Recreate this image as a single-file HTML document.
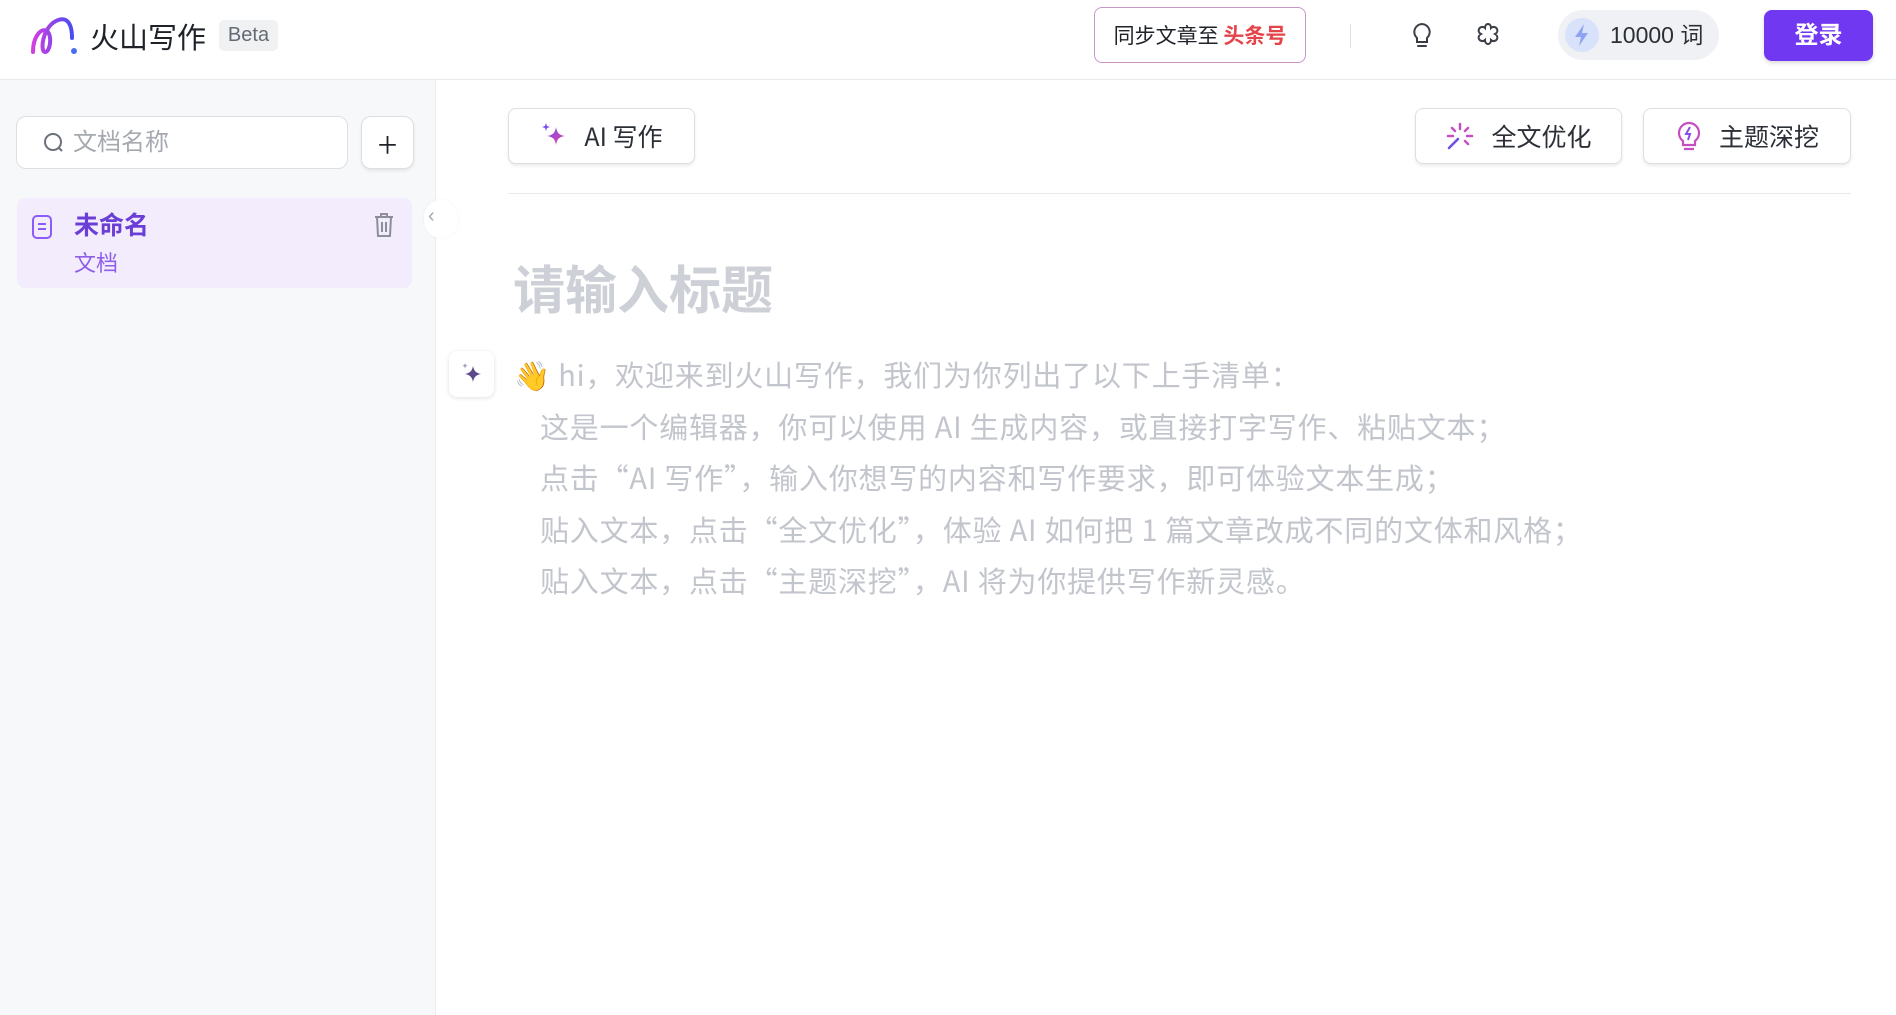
<!DOCTYPE html>
<html><head><meta charset="utf-8"><style>
*{box-sizing:border-box;margin:0;padding:0}
body{width:1896px;height:1015px;overflow:hidden;background:#fff;font-family:"Liberation Sans","Noto Sans CJK SC",sans-serif;position:relative;color:#1f2329}
.abs{position:absolute}
.hdr{left:0;top:0;width:1896px;height:80px;border-bottom:1px solid #e8e9ec;background:#fff}
.side{left:0;top:80px;width:436px;height:935px;background:#f7f8fa;border-right:1px solid #eceef1}
.btn{background:#fff;border:1px solid #dcdfe4;border-radius:8px;box-shadow:0 2px 3px rgba(0,0,0,.08);display:flex;align-items:center;justify-content:center;font-size:25px;color:#2b2f36;font-family:"Noto Sans CJK SC",sans-serif}
.body p{position:absolute;left:540px;font-size:29px;letter-spacing:0.8px;color:#c2c5cc;white-space:nowrap;line-height:40px;font-family:"Noto Sans CJK SC",sans-serif}
</style></head><body>
<div class="abs hdr"></div>
<svg class="abs" style="left:30px;top:16px" width="54" height="40" viewBox="0 0 54 40">
<defs><linearGradient id="g" x1="0" x2="1"><stop offset="0" stop-color="#d43ee0"/><stop offset="1" stop-color="#4b4ef0"/></linearGradient></defs>
<path d="M3 36 C3 20 12 10 18 16 C22 22 20 36 15 36 C10 36 12 12 26 5 C36 0 42 6 42 22" fill="none" stroke="url(#g)" stroke-width="4" stroke-linecap="round"/>
<circle cx="44" cy="35" r="3" fill="#4b6cf0"/></svg>
<div class="abs" style="left:90px;top:16px;font-size:29px;line-height:40px;color:#1f2329;font-family:'Noto Sans CJK SC',sans-serif">火山写作</div>
<div class="abs" style="left:219px;top:20px;width:59px;height:31px;background:#f0f1f3;border-radius:5px;font-size:20px;color:#646a73;text-align:center;line-height:31px">Beta</div>
<div class="abs" style="left:1094px;top:7px;width:212px;height:56px;border:1px solid #c996c8;border-radius:8px;font-size:21px;line-height:54px;text-align:center;color:#1f2329;font-family:'Noto Sans CJK SC',sans-serif">同步文章至 <b style="color:#e5434a">头条号</b></div>
<div class="abs" style="left:1350px;top:24px;width:1px;height:24px;background:#dfe1e5"></div>
<svg class="abs" style="left:1410px;top:22px" width="24" height="28" viewBox="0 0 24 28"><path d="M12 2a8 8 0 0 0-5 14v4h10v-4a8 8 0 0 0-5-14zM8 24h8" fill="none" stroke="#3b3f45" stroke-width="2" stroke-linecap="round"/></svg>
<svg class="abs" style="left:1474px;top:21px" width="28" height="28" viewBox="0 0 28 28"><path d="M14 3c2 0 3 2 3 4 2-2 5-1 6 1s0 4-2 5c2 1 3 3 2 5s-4 3-6 1c0 2-1 4-3 4s-3-2-3-4c-2 2-5 1-6-1s0-4 2-5c-2-1-3-3-2-5s4-3 6-1c0-2 1-4 3-4z" fill="none" stroke="#3b3f45" stroke-width="2"/></svg>
<div class="abs" style="left:1558px;top:10px;width:161px;height:50px;background:#f0f1f4;border-radius:25px"></div>
<div class="abs" style="left:1565px;top:18px;width:34px;height:34px;border-radius:17px;background:#d9e2fb"></div>
<svg class="abs" style="left:1573px;top:23px" width="18" height="24" viewBox="0 0 18 24"><path d="M11 1 2 14h6l-2 9 9-13H9z" fill="#8ea4f0"/></svg>
<div class="abs" style="left:1610px;top:10px;font-size:23px;line-height:50px;color:#2b2f36">10000 词</div>
<div class="abs" style="left:1764px;top:10px;width:109px;height:51px;background:#7138f2;border-radius:8px;color:#fff;font-size:24px;font-weight:bold;text-align:center;line-height:51px;box-shadow:0 2px 4px rgba(0,0,0,.15)">登录</div>

<div class="abs side"></div>
<div class="abs" style="left:16px;top:116px;width:332px;height:53px;background:#fff;border:1px solid #dcdfe4;border-radius:10px"></div>
<svg class="abs" style="left:43px;top:132px" width="22" height="22" viewBox="0 0 22 22"><circle cx="10" cy="10" r="8" fill="none" stroke="#6b7079" stroke-width="2"/><path d="M16 16l3 3" stroke="#6b7079" stroke-width="2"/></svg>
<div class="abs" style="left:73px;top:116px;font-size:24px;line-height:53px;color:#a5a9b0">文档名称</div>
<div class="abs btn" style="left:361px;top:116px;width:53px;height:53px;border-radius:10px;font-size:36px;font-weight:300;color:#1f2329">+</div>
<div class="abs" style="left:17px;top:198px;width:395px;height:90px;background:#f2ecfd;border-radius:8px"></div>
<svg class="abs" style="left:30px;top:214px" width="24" height="26" viewBox="0 0 24 26"><rect x="3" y="2" width="18" height="22" rx="4" fill="none" stroke="#8b5cf6" stroke-width="2"/><path d="M8 10h8M8 15h8" stroke="#8b5cf6" stroke-width="2"/></svg>
<div class="abs" style="left:74px;top:208px;font-size:25px;line-height:36px;color:#6b3fd6;font-weight:bold">未命名</div>
<div class="abs" style="left:74px;top:248px;font-size:22px;line-height:32px;color:#8f5fe8">文档</div>
<svg class="abs" style="left:373px;top:212px" width="22" height="26" viewBox="0 0 22 26"><path d="M2 5h18M8 5V2h6v3M4 5l1 19h12l1-19M9 10v10M13 10v10" fill="none" stroke="#8a8f98" stroke-width="2"/></svg>
<div class="abs" style="left:424px;top:200px;width:34px;height:38px;border-radius:17px;background:#fff;box-shadow:0 0 3px rgba(0,0,0,.05)"></div>
<div class="abs" style="left:428px;top:205px;font-size:20px;color:#a5a9b0">‹</div>

<div class="abs btn" style="left:508px;top:108px;width:187px;height:56px"><svg width="30" height="30" viewBox="0 0 30 30" style="margin-right:14px"><defs><linearGradient id="s" x1="0" y1="0" x2="1" y2="1"><stop offset="0" stop-color="#7b4cf0"/><stop offset="1" stop-color="#e0479a"/></linearGradient></defs><path d="M16 6c1 6 3 8 9 9-6 1-8 3-9 9-1-6-3-8-9-9 6-1 8-3 9-9z" fill="url(#s)"/><path d="M6 2l1 3 3 1-3 1-1 3-1-3-3-1 3-1z" fill="#7b4cf0"/></svg>AI 写作</div>
<div class="abs btn" style="left:1415px;top:108px;width:207px;height:56px"><svg width="30" height="30" viewBox="0 0 30 30" style="margin-right:16px"><g stroke-width="2.5" stroke-linecap="round"><path d="M4 27l9-9" stroke="#6a4ee8"/><path d="M15 3v5M23 7l-3 3M27 15h-5M23 23l-3-3M7 7l3 3M3 15h5" stroke="#c450c0"/></g></svg>全文优化</div>
<div class="abs btn" style="left:1643px;top:108px;width:208px;height:56px"><svg width="28" height="32" viewBox="0 0 28 32" style="margin-right:16px"><path d="M14 3a10 10 0 0 0-6 18v4h12v-4a10 10 0 0 0-6-18zM9 29h10" fill="none" stroke="#c450c0" stroke-width="2.2"/><path d="M15 7l-4 7h4l-2 6" fill="none" stroke="#8a4ee8" stroke-width="2"/></svg>主题深挖</div>
<div class="abs" style="left:508px;top:193px;width:1343px;height:1px;background:#e8e9ec"></div>

<div class="abs" style="left:513px;top:252px;font-size:52px;line-height:70px;color:#cdd0d6;font-weight:bold;font-family:'Noto Sans CJK SC',sans-serif">请输入标题</div>
<div class="abs" style="left:449px;top:351px;width:45px;height:46px;background:#fff;border-radius:8px;box-shadow:0 1px 5px rgba(0,0,0,.12)"></div>
<svg class="abs" style="left:458px;top:360px" width="28" height="28" viewBox="0 0 28 28"><path d="M15 6c1 5 3 7 8 8-5 1-7 3-8 8-1-5-3-7-8-8 5-1 7-3 8-8z" fill="#5b4a8a"/><path d="M7 3l.7 2 2 .7-2 .7L7 8.5l-.7-2-2-.7 2-.7z" fill="#9a8fc0"/></svg>
<div class="body">
<p style="left:514px;top:354px">👋 hi，欢迎来到火山写作，我们为你列出了以下上手清单：</p>
<p style="top:406px">这是一个编辑器，你可以使用 AI 生成内容，或直接打字写作、粘贴文本；</p>
<p style="top:457px">点击“AI 写作”，输入你想写的内容和写作要求，即可体验文本生成；</p>
<p style="top:509px">贴入文本，点击“全文优化”，体验 AI 如何把 1 篇文章改成不同的文体和风格；</p>
<p style="top:560px">贴入文本，点击“主题深挖”，AI 将为你提供写作新灵感。</p>
</div>
</body></html>
